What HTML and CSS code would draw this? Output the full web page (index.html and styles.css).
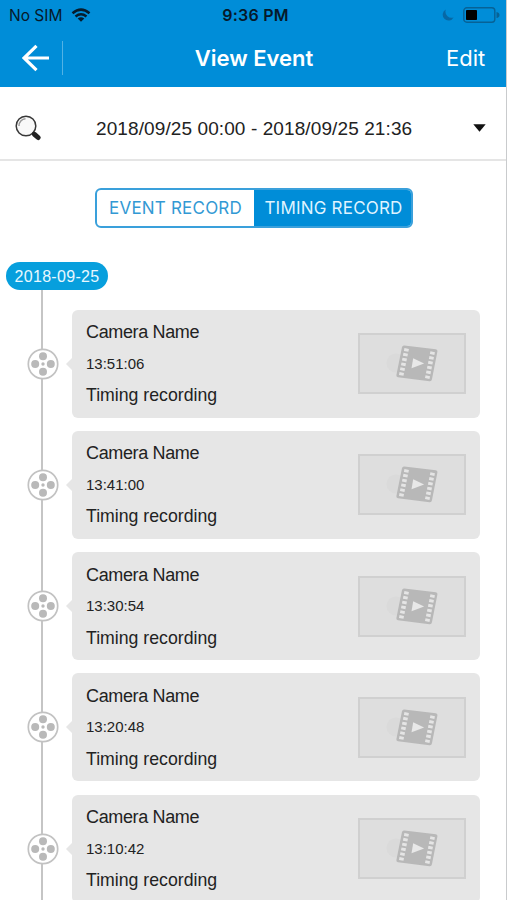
FILE: index.html
```
<!DOCTYPE html>
<html lang="en">
<head>
<meta charset="utf-8">
<title>View Event</title>
<link rel="stylesheet" href="styles.css">
</head>
<body>
<svg class="defs" aria-hidden="true">
  <symbol id="reel" viewBox="0 0 32 32">
    <circle cx="16" cy="16" r="14.7" fill="#fff" stroke="#c2c2c2" stroke-width="1.7"/>
    <g fill="#b9b9b9"><circle cx="16" cy="8.2" r="4"/><circle cx="8.2" cy="16" r="4"/><circle cx="23.8" cy="16" r="4"/><circle cx="16" cy="23.8" r="4"/><circle cx="16" cy="16" r="1.7"/></g>
  </symbol>
  <symbol id="film" viewBox="0 0 108 61">
    <circle cx="38" cy="30" r="9.500" fill="#dadada"/>
    <path d="M46.300 12.500 77.800 16.300q2 .3 1.600 2.200L73.900 46.500q-.4 2-2.400 1.700L40 44.300q-2-.3-1.600-2.200L43.900 14.500q.4-2.200 2.400-2Z" fill="#b8b8b8"/>
    <path d="m55.200 25.300 10.900 5.200-12.600 4.700Z" fill="#e8e8e8"/>
    <path d="M48.700 15.500 43.200 42.400M74.700 18.700 69.200 45.600" fill="none" stroke="#e5e5e5" stroke-width="4.600" stroke-dasharray="2.900 2"/>
  </symbol>
</svg>
<div class="screen">
  <header class="header">
    <div class="status">
      <div class="carrier"><span>No SIM</span>
        <svg class="wifi" viewBox="0 0 20 14"><path d="M1.500 5.200Q10-2 18.500 5.200M4.500 8.400q5.500-4.300 11 0" fill="none" stroke="#071c2c" stroke-width="2.500"/><path d="M6.700 10.500q3.300-2.500 6.600 0L10 13.800Z" fill="#071c2c"/></svg>
      </div>
      <div class="clock">9:36 PM</div>
      <div class="indicators">
        <svg class="moon" viewBox="0 0 12 12"><path d="M3.800.6A5.800 5.800 0 1 0 11.600 8.500 6.200 6.200 0 0 1 3.800.6Z" fill="#0768a5"/></svg>
        <svg class="battery" viewBox="0 0 37 16"><rect x=".8" y=".8" width="31" height="14.400" rx="3" fill="none" stroke="#076296" stroke-width="1.400"/><rect x="3" y="3" width="11" height="10" rx=".8" fill="#000"/><path d="M33.500 5q3 .5 3 3t-3 3Z" fill="#076296"/></svg>
      </div>
    </div>
    <nav class="nav">
      <div class="back"><svg viewBox="0 0 28 28"><path d="M27 14H2M14.500 1.800 2 14l12.500 12.200" fill="none" stroke="#fff" stroke-width="3.200"/></svg></div>
      <h1>View Event</h1>
      <div class="edit">Edit</div>
    </nav>
  </header>
  <div class="range">
    <svg class="search" viewBox="0 0 26 26"><circle cx="11" cy="11" r="9.800" fill="#f9f9f9" stroke="#383838" stroke-width="1.500"/><path d="M4 11a7 7 0 0 1 6.500-7.200" fill="none" stroke="#999" stroke-width="1.500"/><path d="m17.500 17.200 2 2" stroke="#333" stroke-width="2"/><path d="m19.500 19.300 3.600 3.200" stroke="#222" stroke-width="5" stroke-linecap="round"/></svg>
    <span class="dates">2018/09/25 00:00 - 2018/09/25 21:36</span>
    <svg class="caret" viewBox="0 0 13 8"><path d="M.3.300h12.400L6.500 7.800Z" fill="#111"/></svg>
  </div>
  <div class="tabs"><div class="tab"><span>EVENT RECORD</span></div><div class="tab active"><span>TIMING RECORD</span></div></div>
  <div class="day"><span>2018-09-25</span></div>
  <main class="timeline">
    <article class="item"><svg class="reel"><use href="#reel"/></svg><div class="card"><div class="info"><div class="name">Camera Name</div><div class="time">13:51:06</div><div class="kind">Timing recording</div></div><div class="thumb"><svg viewBox="0 0 108 61"><use href="#film"/></svg></div></div></article>
    <article class="item"><svg class="reel"><use href="#reel"/></svg><div class="card"><div class="info"><div class="name">Camera Name</div><div class="time">13:41:00</div><div class="kind">Timing recording</div></div><div class="thumb"><svg viewBox="0 0 108 61"><use href="#film"/></svg></div></div></article>
    <article class="item"><svg class="reel"><use href="#reel"/></svg><div class="card"><div class="info"><div class="name">Camera Name</div><div class="time">13:30:54</div><div class="kind">Timing recording</div></div><div class="thumb"><svg viewBox="0 0 108 61"><use href="#film"/></svg></div></div></article>
    <article class="item"><svg class="reel"><use href="#reel"/></svg><div class="card"><div class="info"><div class="name">Camera Name</div><div class="time">13:20:48</div><div class="kind">Timing recording</div></div><div class="thumb"><svg viewBox="0 0 108 61"><use href="#film"/></svg></div></div></article>
    <article class="item"><svg class="reel"><use href="#reel"/></svg><div class="card"><div class="info"><div class="name">Camera Name</div><div class="time">13:10:42</div><div class="kind">Timing recording</div></div><div class="thumb"><svg viewBox="0 0 108 61"><use href="#film"/></svg></div></div></article>
  </main>
</div>
</body>
</html>
```
FILE: styles.css
```
* { box-sizing: border-box; }
body { margin: 0; background: #fff; color: #222; font-family: "Liberation Sans", Arial, sans-serif; }
svg { display: block; flex: none; }
.defs { position: absolute; width: 0; height: 0; }
.screen { width: 507px; height: 900px; overflow: hidden; border-right: 1px solid #c9cbcd; display: flex; flex-direction: column; }
.header { height: 87px; flex: none; background: #008dd8; font-family: Inter, sans-serif; }
.status { height: 30px; display: grid; grid-template-columns: 1fr auto 1fr; align-items: center; padding: 0 6px 0 9px; color: #06192a; font-size: 15.500px; }
.carrier { display: flex; align-items: center; gap: 9px; }
.wifi { width: 20px; height: 14px; }
.clock { font-weight: 600; font-size: 16px; letter-spacing: .25px; margin-left: 2px; }
.indicators { display: flex; justify-content: flex-end; align-items: center; gap: 9px; }
.moon { width: 12px; height: 12px; }
.battery { width: 37px; height: 16px; }
.nav { height: 55px; display: grid; grid-template-columns: 63px 1fr 63px; align-items: center; color: #fff; }
.back { height: 34px; margin-top: 1px; border-right: 1px solid #52b2e5; display: flex; align-items: center; padding-left: 22px; }
.back svg { width: 28px; height: 28px; }
h1 { margin: 0 0 0 2px; text-align: center; font-size: 22px; font-weight: 600; }
.edit { font-size: 22px; margin-left: 3px; }
.range { height: 74px; flex: none; border-bottom: 2px solid #e5e5e5; display: flex; align-items: center; padding: 9px 20px 0 15px; }
.search { width: 26px; height: 26px; }
.dates { font-size: 19px; letter-spacing: .1px; margin: 2px 0 0 55px; white-space: nowrap; }
.caret { width: 13px; height: 8px; margin-left: auto; }
.tabs { width: 318px; height: 40px; flex: none; margin: 27px 0 0 95px; border: 2px solid #3aa0db; border-radius: 6px; display: grid; grid-template-columns: 157px 1fr; overflow: hidden; font: 17px Inter, sans-serif; letter-spacing: .2px; color: #3299d4; }
.tab { display: flex; align-items: center; justify-content: center; white-space: nowrap; }
.active { background: #008dd8; color: #dff3ff; margin: -2px -2px -2px 0; }
.day { width: 102px; height: 28px; flex: none; margin: 34px 0 0 6px; padding-top: 1px; border-radius: 14px; background: #079fdd; color: #e8f8ff; font-size: 16px; letter-spacing: .3px; display: flex; align-items: center; justify-content: center; }
.timeline { height: 611px; flex: none; padding-top: 19.500px; background: linear-gradient(#c5c5c5, #c5c5c5) 41px 0 / 2px 100% no-repeat; display: flex; flex-direction: column; gap: 13.300px; }
.item { height: 108px; flex: none; display: flex; align-items: center; padding-left: 27px; }
.reel { width: 32px; height: 32px; margin-right: 13px; }
.card { width: 408px; height: 108px; border-radius: 6px; background: #e6e6e6; display: flex; align-items: center; justify-content: space-between; padding: 0 14px; position: relative; }
.card::before { content: ""; position: absolute; left: -6px; top: 48px; border: 6px solid transparent; border-right-color: #e6e6e6; border-left: 0; }
.info { padding-top: 1px; font-size: 17.700px; line-height: 21px; display: flex; flex-direction: column; gap: 10.500px; white-space: nowrap; }
.name { font-size: 18px; letter-spacing: -.36px; }
.time { font-size: 15px; margin: -1px 0 1px; }
.thumb { width: 108px; height: 61px; border: 2px solid #d0d0d0; background: #dedede; }
.thumb svg { width: 108px; height: 61px; margin: -2px; }
```
